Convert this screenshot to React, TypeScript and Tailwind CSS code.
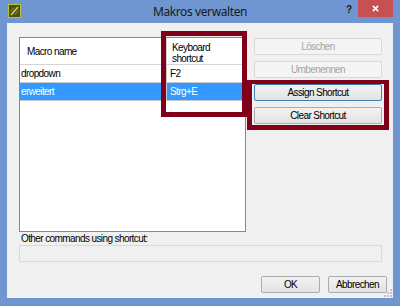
const ui = { fontFamily: '"Liberation Sans", Arial, sans-serif' };

function Btn({ children, disabled, focus, className = "" }: { children: React.ReactNode; disabled?: boolean; focus?: boolean; className?: string }) {
  const base = "h-[17px] flex items-center justify-center rounded-[2px] text-[10px] tracking-[-0.6px] leading-none border";
  const look = disabled
    ? "border-[#d9d9d9] bg-[#f4f4f4] text-[#a3a3a3]"
    : focus
    ? "border-[#3c7fb1] bg-gradient-to-b from-[#f2f2f2] to-[#e3e3e3] text-black"
    : "border-[#acacac] bg-gradient-to-b from-[#f2f2f2] to-[#e3e3e3] text-black";
  return <div className={`${base} ${look} ${className}`}>{children}</div>;
}

export default function App() {
  return (
    <div className="w-[400px] h-[306px] bg-[#6f96d0] flex flex-col relative overflow-hidden" style={ui}>
      {/* title bar */}
      <div className="h-[23px] grid grid-cols-[1fr_auto_1fr] items-start">
        <div className="pl-[8px] pt-[4px]">
          <svg width="13" height="14" viewBox="0 0 13 14">
            <rect x="0.5" y="0.5" width="12" height="13" fill="#4d4d1f" stroke="#b9c52f" />
            <path d="M3 11 L10 3" stroke="#c9d24a" strokeWidth="1.6" />
            <path d="M2.5 7.5 L6 3.5" stroke="#8e9a2c" strokeWidth="1" />
            <path d="M7 10.5 L10.5 6.5" stroke="#8e9a2c" strokeWidth="1" />
          </svg>
        </div>
        <div className="pt-[4px] text-[12px] tracking-[-0.4px] leading-[16px] text-[#1a1a1a]" style={{ fontFamily: '"Noto Sans", "Open Sans", sans-serif' }}>
          Makros verwalten
        </div>
        <div className="flex justify-end items-start pr-[7px]">
          <div className="pt-[4px] pr-[6px] text-[10px] font-bold text-[#1a1a1a] leading-[12px]">?</div>
          <div className="w-[35px] h-[17px] bg-[#c75050] flex items-center justify-center">
            <svg width="7" height="7" viewBox="0 0 8 8">
              <path d="M1 1 L7 7 M7 1 L1 7" stroke="#ffffff" strokeWidth="1.7" />
            </svg>
          </div>
        </div>
      </div>

      {/* client */}
      <div className="mx-[7px] h-[275px] bg-[#f0f0f0] relative flex flex-col pt-[14px] pl-[12px]">
        <div className="flex gap-[8px]">
          {/* list */}
          <div className="w-[227px] h-[195px] border border-[#828790] bg-white flex flex-col text-[10px] tracking-[-0.6px] text-black">
            <div className="flex h-[27px] border-b border-[#d5d5d5]">
              <div className="w-[147px] flex items-center pl-[7px] border-r border-[#d5d5d5]">Macro name</div>
              <div className="w-[76px] pl-[5px] pt-[4px] leading-[11px] border-r border-[#d5d5d5]">
                Keyboard
                <br />
                shortcut
              </div>
            </div>
            <div className="flex h-[18px] border-b border-[#c8c8c8]">
              <div className="w-[147px] flex items-center pl-[1px] border-r border-[#c8c8c8]">dropdown</div>
              <div className="w-[76px] flex items-center pl-[3px] border-r border-[#c8c8c8]">F2</div>
            </div>
            <div className="flex h-[18px] border-b border-[#c8c8c8] text-white">
              <div className="w-[147px] flex items-center pl-[1px] bg-[#3399ff] border-r border-[#c8c8c8]">erweitert</div>
              <div className="w-[76px] flex items-center pl-[3px] bg-[#3399ff]">Strg+E</div>
            </div>
          </div>

          {/* buttons */}
          <div className="w-[128px] pt-[1px] flex flex-col gap-[6px]">
            <Btn disabled>Löschen</Btn>
            <Btn disabled>Umbenennen</Btn>
            <Btn focus>Assign Shortcut</Btn>
            <Btn>Clear Shortcut</Btn>
          </div>
        </div>

        <div className="h-[13px] leading-[13px] text-[10px] tracking-[-0.6px] text-black pl-[2px]">Other commands using shortcut:</div>
        <div className="w-[363px] h-[17px] border border-[#d9d9d9] bg-[#f0f0f0]" />

        <div className="flex justify-end gap-[8px] pr-[6px] mt-[14px]">
          <Btn className="w-[59px]">OK</Btn>
          <Btn className="w-[59px]">Abbrechen</Btn>
        </div>

        {/* size grip */}
        <div className="absolute right-[1px] bottom-[1px]">
          <svg width="8" height="8" viewBox="0 0 8 8">
            <rect x="6" y="0" width="2" height="2" fill="#c4c4c4" />
            <rect x="3" y="3" width="2" height="2" fill="#c4c4c4" />
            <rect x="6" y="3" width="2" height="2" fill="#c4c4c4" />
            <rect x="0" y="6" width="2" height="2" fill="#c4c4c4" />
            <rect x="3" y="6" width="2" height="2" fill="#c4c4c4" />
            <rect x="6" y="6" width="2" height="2" fill="#c4c4c4" />
          </svg>
        </div>
      </div>

      {/* red highlight frames */}
      <div className="absolute left-[161px] top-[31px] w-[86px] h-[86px] border-[5px] border-[#80001a]" />
      <div className="absolute left-[247px] top-[80px] w-[142px] h-[50px] border-[5px] border-t-[4px] border-[#80001a]" />
    </div>
  );
}
